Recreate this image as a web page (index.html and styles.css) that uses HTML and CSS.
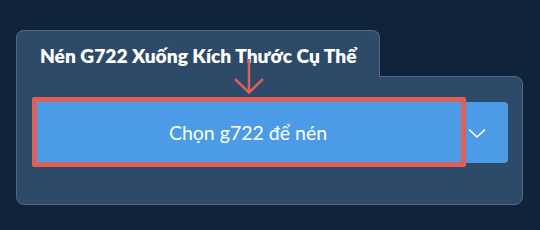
FILE: index.html
```html
<!DOCTYPE html>
<html lang="vi">
<head>
  <meta charset="UTF-8">
  <meta name="viewport" content="width=device-width, initial-scale=1.0">
  <title>Nén G722</title>
  <link rel="stylesheet" href="styles.css">
</head>
<body>

<div class="wrap">
  <div class="tab">Nén G722 Xuống Kích Thước Cụ Thể</div>
  <div class="panel">
    <div class="btn-group">
      <button class="btn-main">Chọn g722 để nén</button>
      <button class="btn-drop">
        <svg width="18" height="11" viewBox="0 0 18 11">
          <polyline points="1,1.5 9,9 17,1.5" fill="none" stroke="#fff" stroke-width="1.6"/>
        </svg>
      </button>
      <!-- annotation overlay -->
      <div class="highlight"></div>
      <svg class="arrow" width="32" height="40" viewBox="0 0 32 40">
        <line x1="16" y1="2" x2="16" y2="36" stroke="#dc5f5a" stroke-width="2.5"/>
        <polyline points="2,22 16,35.5 30,22" fill="none" stroke="#dc5f5a" stroke-width="2.5"/>
      </svg>
    </div>
  </div>
</div>

</body>
</html>
```

FILE: styles.css
```css
/* Page */
body {
  margin: 0;
  background: #11233a;
  font-family: Lato, "Noto Sans", sans-serif;
  color: #fff;
}
.wrap {
  padding: 30px 17px 0 16px;
}
/* Tab header */
.tab {
  position: relative;
  z-index: 1;
  width: 364px;
  height: 47px;
  box-sizing: border-box;
  padding: 13px 0 0 23px;
  margin-bottom: -1px;
  background: #2d4a69;
  border: 1px solid #4d6a8a;
  border-bottom: none;
  border-radius: 8px 8px 0 0;
  font-size: 19.2px;
  font-weight: 800;
  line-height: 24px;
  white-space: nowrap;
}
/* Panel */
.panel {
  height: 129px;
  box-sizing: border-box;
  padding: 25px 14px 0 15px;
  background: #2d4a69;
  border: 1px solid #4d6a8a;
  border-radius: 0 8px 8px 8px;
}
.btn-group {
  position: relative;
  z-index: 2;
  display: flex;
  height: 61px;
}
.btn-group button {
  border: none;
  background: #4b9be6;
  color: #fff;
  font-family: Lato, "Noto Sans", sans-serif;
  cursor: pointer;
}
.btn-main {
  flex: 1;
  padding: 0 2px 0 0;
  font-size: 19.5px;
  border-radius: 4px 0 0 4px;
}
.btn-drop {
  width: 42px;
  padding: 2px 0 0 2px;
  display: flex;
  align-items: center;
  justify-content: flex-start;
  border-radius: 0 4px 4px 0;
}
/* Annotation */
.highlight {
  position: absolute;
  left: 0;
  top: -5px;
  width: 434px;
  height: 70px;
  box-sizing: border-box;
  border: 5px solid #dc5f5a;
  border-radius: 2px;
  pointer-events: none;
}
.arrow {
  position: absolute;
  left: 201px;
  top: -45px;
}
```
